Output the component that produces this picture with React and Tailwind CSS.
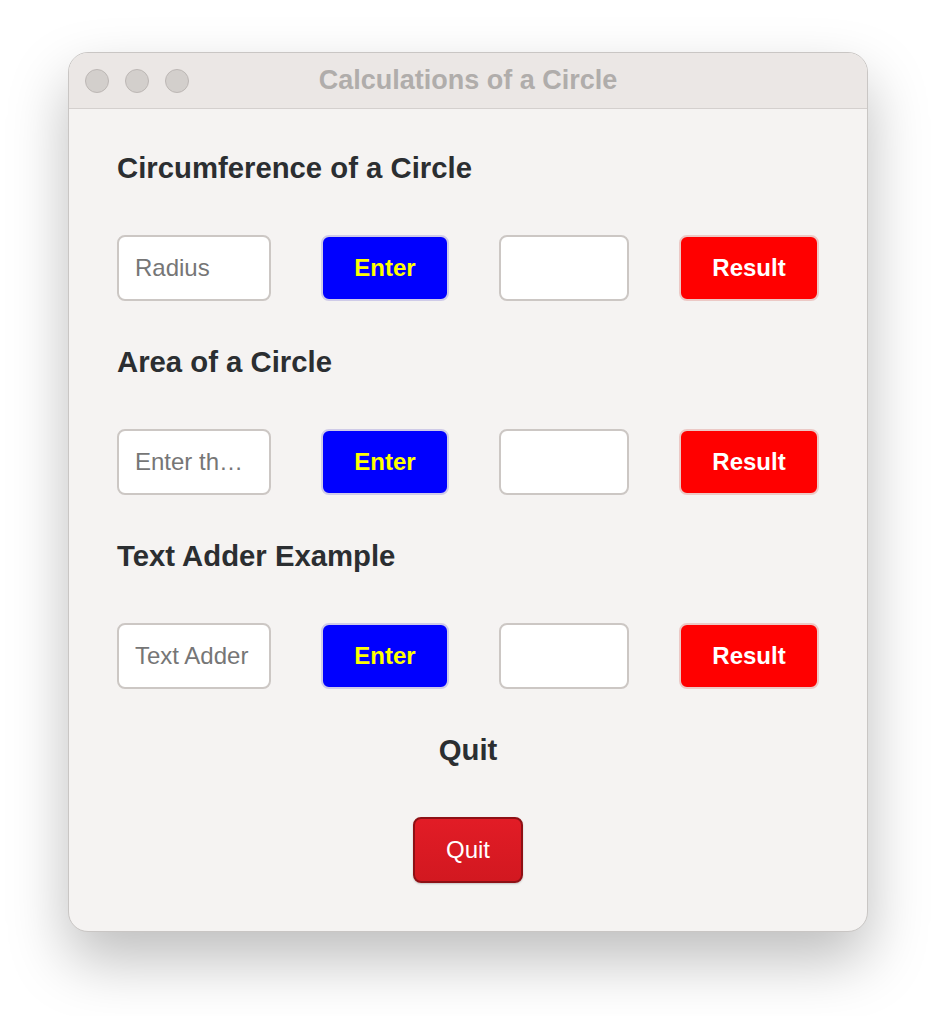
import React from 'react';

// ── Window chrome: traffic lights + centered title ───────────────────────────
function TitleBar({ title }) {
  return (
    <div className="relative flex items-center h-[56px] px-[16px] bg-[#ebe7e5] border-b border-[#d4d0ce]">
      <div className="flex gap-[16px]">
        {[0, 1, 2].map(i => (
          <span key={i} className="block w-[24px] h-[24px] rounded-full bg-[#d3cfcc] border border-[#bcb7b4]" />
        ))}
      </div>
      <span className="absolute inset-x-0 text-center text-[27px] font-bold text-[#b0adab] pointer-events-none">
        {title}
      </span>
    </div>
  );
}

// ── One calculator row: input / Enter / output / Result ─────────────────────
function CalcRow({ placeholder }) {
  return (
    <div className="flex gap-[50px] h-[66px]">
      <input
        placeholder={placeholder}
        className="w-[154px] h-full rounded-[8px] border-2 border-[#ccc7c4] bg-white px-[16px] text-[24px] text-[#333] placeholder:text-[#767676] outline-none text-ellipsis"
      />
      <button className="w-[128px] h-full rounded-[8px] border-2 border-[#cfcbe8] bg-[#0000ff] text-[24px] font-bold text-[#ffff00]">
        Enter
      </button>
      <input className="w-[130px] h-full rounded-[8px] border-2 border-[#ccc7c4] bg-white px-[16px] text-[24px] outline-none" />
      <button className="w-[140px] h-full rounded-[8px] border-2 border-[#ecc9c6] bg-[#ff0000] text-[24px] font-bold text-white">
        Result
      </button>
    </div>
  );
}

function Section({ heading, placeholder, first }) {
  return (
    <div className={first ? '' : 'mt-[45px]'}>
      <h2 className="h-[32px] leading-[32px] text-[29.3px] font-bold text-[#2b2e31] mb-[51px]">{heading}</h2>
      <CalcRow placeholder={placeholder} />
    </div>
  );
}

export default function App() {
  return (
    <div
      className="w-[936px] h-[1016px] bg-white pt-[52px] pl-[68px]"
      style={{ fontFamily: '"Liberation Sans", Arial, Helvetica, sans-serif' }}
    >
      <div className="w-[800px] h-[880px] rounded-[20px] overflow-hidden border border-[#c9c6c4] bg-[#f5f3f2] shadow-[0_28px_60px_rgba(0,0,0,0.26)]">
        <TitleBar title="Calculations of a Circle" />

        <div className="px-[48px] pt-[43px]">
          <Section first heading="Circumference of a Circle" placeholder="Radius" />
          <Section heading="Area of a Circle" placeholder="Enter th…" />
          <Section heading="Text Adder Example" placeholder="Text Adder" />

          <div className="mt-[45px] flex flex-col items-center">
            <h2 className="h-[32px] leading-[32px] text-[29.3px] font-bold text-[#2b2e31] mb-[51px]">Quit</h2>
            <button className="w-[110px] h-[66px] rounded-[8px] border-2 border-[#8e1015] bg-gradient-to-b from-[#e21c26] to-[#d21820] text-[24px] text-white shadow-[0_1px_2px_rgba(0,0,0,0.2)]">
              Quit
            </button>
          </div>
        </div>
      </div>
    </div>
  );
}
